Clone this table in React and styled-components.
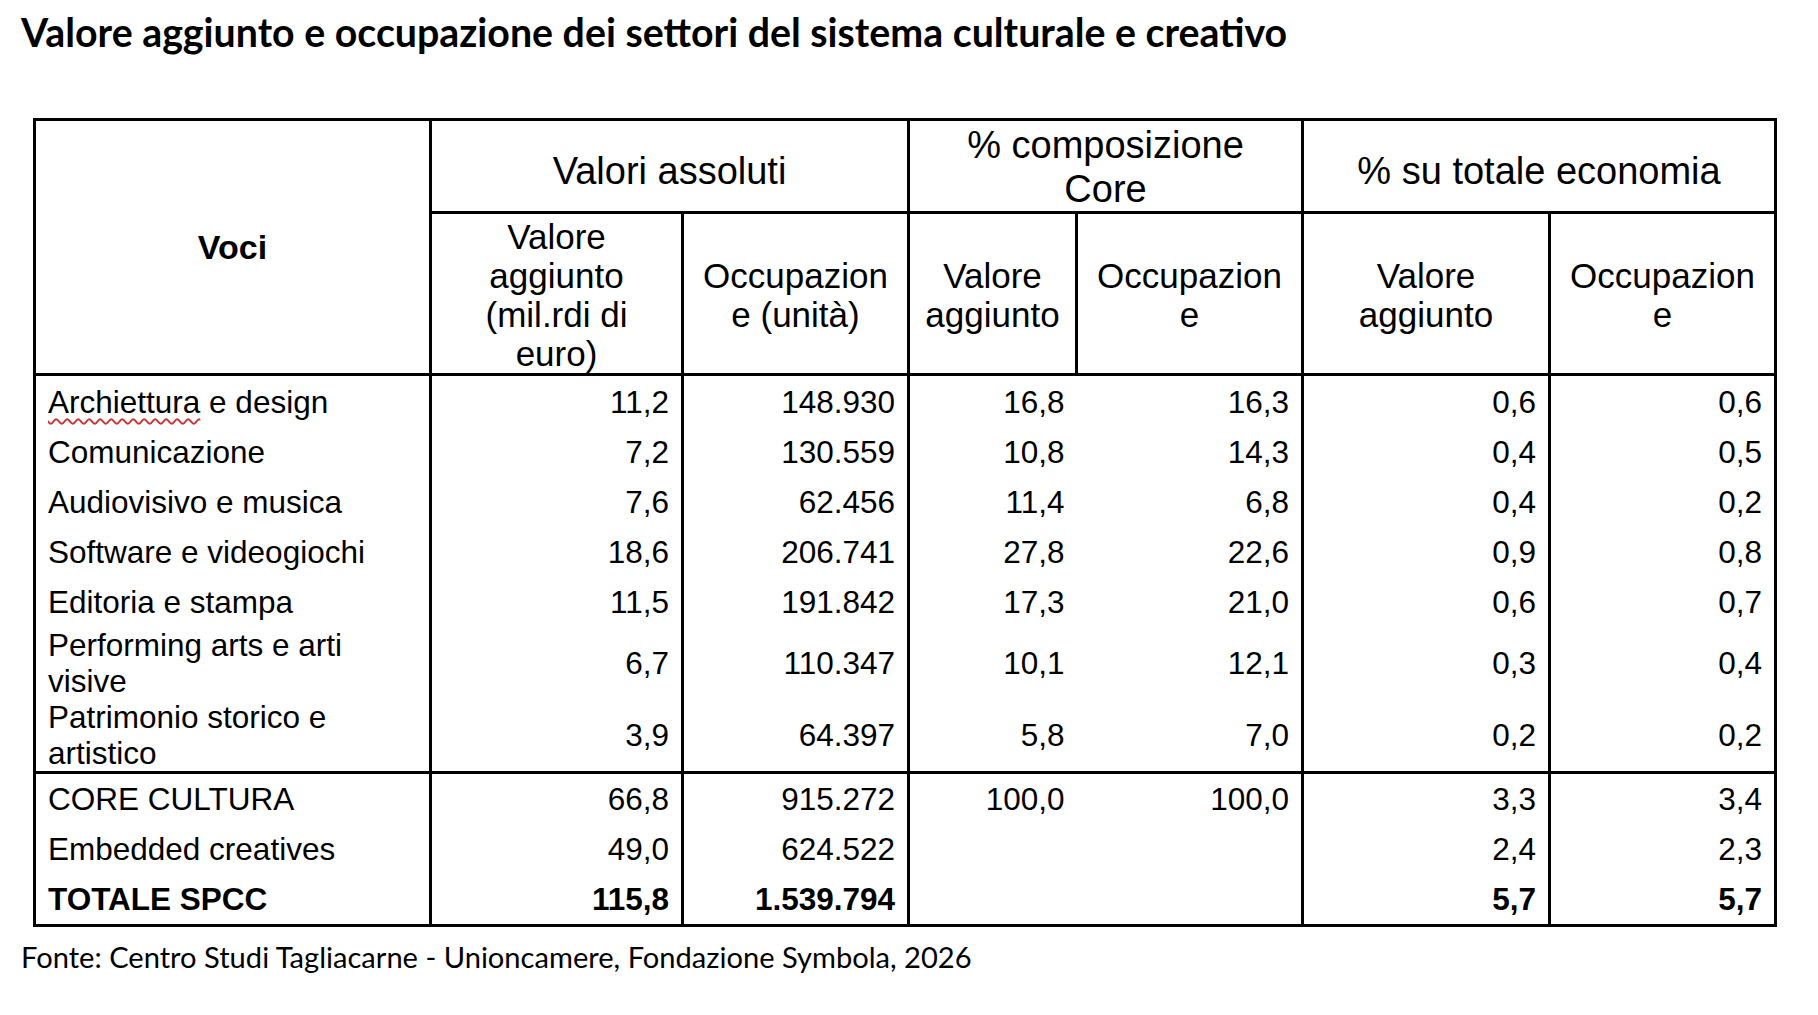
import React from 'react';
import styled, { createGlobalStyle } from 'styled-components';

const GlobalStyle = createGlobalStyle`
  html, body {
    margin: 0;
    padding: 0;
    background: #fff;
  }
`;

// righe del core, poi totali
const coreRows = [
  { label: 'Archiettura e design', typo: true, values: ['11,2', '148.930', '16,8', '16,3', '0,6', '0,6'] },
  { label: 'Comunicazione', values: ['7,2', '130.559', '10,8', '14,3', '0,4', '0,5'] },
  { label: 'Audiovisivo e musica', values: ['7,6', '62.456', '11,4', '6,8', '0,4', '0,2'] },
  { label: 'Software e videogiochi', values: ['18,6', '206.741', '27,8', '22,6', '0,9', '0,8'] },
  { label: 'Editoria e stampa', values: ['11,5', '191.842', '17,3', '21,0', '0,6', '0,7'] },
  { label: ['Performing arts e arti', 'visive'], values: ['6,7', '110.347', '10,1', '12,1', '0,3', '0,4'] },
  { label: ['Patrimonio storico e', 'artistico'], values: ['3,9', '64.397', '5,8', '7,0', '0,2', '0,2'] },
];

const totalRows = [
  { label: 'CORE CULTURA', values: ['66,8', '915.272', '100,0', '100,0', '3,3', '3,4'] },
  { label: 'Embedded creatives', values: ['49,0', '624.522', '', '', '2,4', '2,3'] },
  { label: 'TOTALE SPCC', bold: true, values: ['115,8', '1.539.794', '', '', '5,7', '5,7'] },
];

const colWidths = [396, 252, 226, 168, 226, 247, 226];

const Page = styled.div`
  padding: 10px 0 40px 0;
  color: #000;
`;

const Title = styled.h1`
  margin: 0 0 64px 21px;
  font-family: 'Lato', 'Open Sans', sans-serif;
  font-weight: 700;
  font-size: 39.3px;
  line-height: 44px;
`;

const Table = styled.table`
  margin-left: 33px;
  width: 1741px;
  table-layout: fixed;
  border-collapse: collapse;
  border: 3px solid #000;
  font-family: 'Liberation Sans', Arial, sans-serif;
`;

const HeadCell = styled.th`
  border: 3px solid #000;
  padding: ${(p) => p.$padTop || 0}px 4px 0;
  text-align: center;
  vertical-align: middle;
  white-space: nowrap;
  font-weight: ${(p) => (p.$bold ? 700 : 400)};
  font-size: ${(p) => p.$size || 35}px;
  line-height: ${(p) => p.$lh || 39}px;
`;

const Cell = styled.td`
  border-left: ${(p) => (p.$noLeft ? 'none' : '3px solid #000')};
  border-right: ${(p) => (p.$noRight ? 'none' : '3px solid #000')};
  padding: ${(p) => (p.$tall ? '0 12px' : '7px 12px')};
  text-align: ${(p) => (p.$right ? 'right' : 'left')};
  vertical-align: middle;
  white-space: nowrap;
  font-size: 31.5px;
  line-height: 36px;
  font-weight: ${(p) => (p.$bold ? 700 : 400)};
`;

const Row = styled.tr`
  border-top: ${(p) => (p.$ruled ? '3px solid #000' : 'none')};

  td {
    padding-top: ${(p) => (p.$first ? '8px' : undefined)};
  }
`;

const Typo = styled.span`
  text-decoration-line: underline;
  text-decoration-style: wavy;
  text-decoration-color: #d0312d;
  text-decoration-thickness: 1.5px;
  text-underline-offset: 5px;
`;

const Source = styled.p`
  margin: 10px 0 0 21px;
  font-family: 'Lato', 'Open Sans', sans-serif;
  font-size: 29.1px;
  line-height: 40px;
`;

const Label = ({ row }) => {
  if (Array.isArray(row.label)) {
    return (
      <>
        {row.label[0]}
        <br />
        {row.label[1]}
      </>
    );
  }
  if (row.typo) {
    const [first, ...rest] = row.label.split(' ');
    return (
      <>
        <Typo>{first}</Typo> {rest.join(' ')}
      </>
    );
  }
  return row.label;
};

const DataRow = ({ row, first, ruled }) => {
  const tall = Array.isArray(row.label);
  return (
    <Row $first={first} $ruled={ruled}>
      <Cell $tall={tall} $bold={row.bold}>
        <Label row={row} />
      </Cell>
      {row.values.map((v, i) => (
        <Cell key={i} $right $tall={tall} $bold={row.bold} $noRight={i === 2} $noLeft={i === 3}>
          {v}
        </Cell>
      ))}
    </Row>
  );
};

const SubHead = ({ lines }) => (
  <HeadCell $padTop={3}>
    {lines.map((l, i) => (
      <React.Fragment key={i}>
        {i > 0 && <br />}
        {l}
      </React.Fragment>
    ))}
  </HeadCell>
);

export default function App() {
  return (
    <Page>
      <GlobalStyle />
      <Title>Valore aggiunto e occupazione dei settori del sistema culturale e creativo</Title>
      <Table>
        <colgroup>
          {colWidths.map((w, i) => (
            <col key={i} style={{ width: w }} />
          ))}
        </colgroup>
        <thead>
          <tr>
            <HeadCell rowSpan={2} $bold $size={34}>
              Voci
            </HeadCell>
            <HeadCell colSpan={2} $size={38} $lh={42} $padTop={9}>
              Valori assoluti
            </HeadCell>
            <HeadCell colSpan={2} $size={38} $lh={44} $padTop={2}>
              % composizione
              <br />
              Core
            </HeadCell>
            <HeadCell colSpan={2} $size={38} $lh={42} $padTop={9}>
              % su totale economia
            </HeadCell>
          </tr>
          <tr>
            <SubHead lines={['Valore', 'aggiunto', '(mil.rdi di', 'euro)']} />
            <SubHead lines={['Occupazion', 'e (unità)']} />
            <SubHead lines={['Valore', 'aggiunto']} />
            <SubHead lines={['Occupazion', 'e']} />
            <SubHead lines={['Valore', 'aggiunto']} />
            <SubHead lines={['Occupazion', 'e']} />
          </tr>
        </thead>
        <tbody>
          {coreRows.map((row, i) => (
            <DataRow key={i} row={row} first={i === 0} />
          ))}
        </tbody>
        <tbody>
          {totalRows.map((row, i) => (
            <DataRow key={i} row={row} ruled={i === 0} />
          ))}
        </tbody>
      </Table>
      <Source>Fonte: Centro Studi Tagliacarne - Unioncamere, Fondazione Symbola, 2026</Source>
    </Page>
  );
}
